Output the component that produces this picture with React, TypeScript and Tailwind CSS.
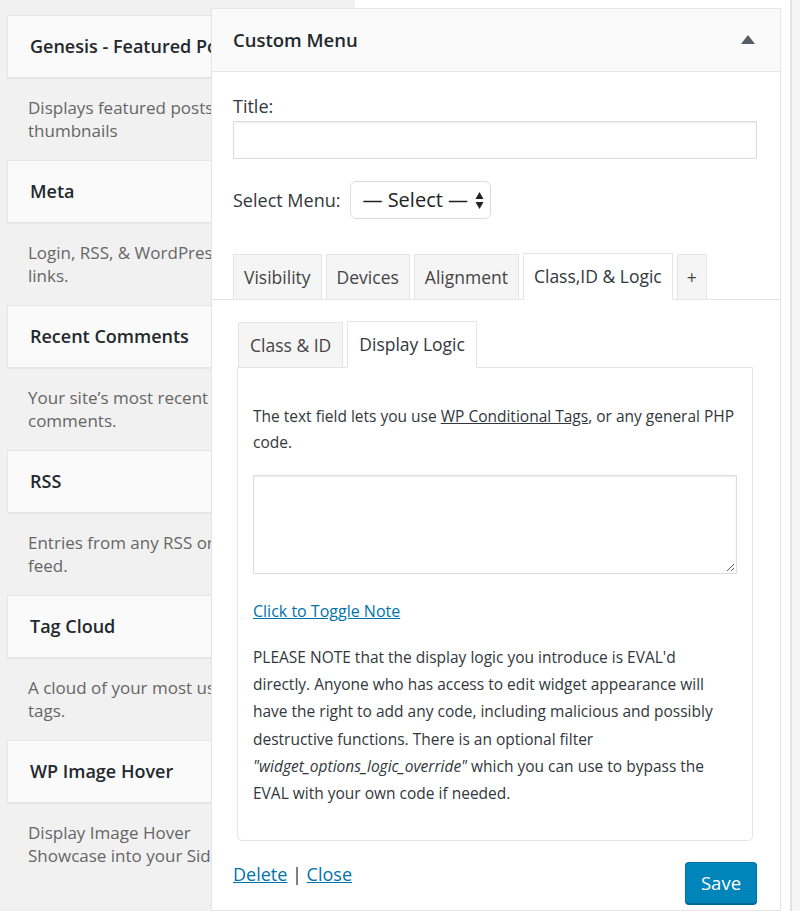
import React from "react";

const cards = [
  { title: "Genesis - Featured Posts", lines: ["Displays featured posts with", "thumbnails"] },
  { title: "Meta", lines: ["Login, RSS, & WordPress.org", "links."] },
  { title: "Recent Comments", lines: ["Your site\u2019s most recent", "comments."] },
  { title: "RSS", lines: ["Entries from any RSS or Atom", "feed."] },
  { title: "Tag Cloud", lines: ["A cloud of your most used", "tags."] },
  { title: "WP Image Hover", lines: ["Display Image Hover", "Showcase into your Sidebar"] },
];

export default function App() {
  return (
    <div
      className="relative flex w-[800px] h-[911px] overflow-hidden bg-[#f1f1f1] text-[#32373c]"
      style={{ fontFamily: '"Open Sans", "Noto Sans", sans-serif' }}
    >
      {/* left widget list */}
      <div className="w-[355px] shrink-0 pl-[7px] pt-[15px] flex flex-col">
        {cards.map((c) => (
          <div key={c.title} className="w-[340px] mb-[18px]">
            <div className="h-[63px] flex items-center px-[22px] bg-[#fafafa] border border-[#e5e5e5] shadow-[0_1px_1px_rgba(0,0,0,0.04)]">
              <span className="text-[18px] font-semibold text-[#23282d] whitespace-nowrap">{c.title}</span>
            </div>
            <div className="pt-[18px] pl-[21px] text-[17px] leading-[23px] text-[#666]">
              {c.lines.map((l) => (
                <div key={l} className="whitespace-nowrap">{l}</div>
              ))}
            </div>
          </div>
        ))}
      </div>

      {/* sidebar column */}
      <div className="w-[435px] shrink-0 bg-white h-full" />
      <div className="w-[10px] shrink-0 border-l-2 border-[#e2e2e2] bg-[#f5f5f5] h-full" />

      {/* open widget panel */}
      <div className="absolute left-[211px] top-[8px] w-[570px] bottom-0 bg-white border border-[#e5e5e5] shadow-[0_1px_1px_rgba(0,0,0,0.04)] flex flex-col">
        <div className="h-[63px] shrink-0 flex items-center justify-between pl-[21px] pr-[25px] bg-[#fafafa] border-b border-[#e5e5e5]">
          <span className="text-[18.5px] font-semibold text-[#23282d]">Custom Menu</span>
          <svg width="14" height="10" viewBox="0 0 14 10">
            <polygon points="7,0 14,9 0,9" fill="#555d66" />
          </svg>
        </div>

        <div className="flex flex-col px-[21px] pt-[23px]">
          <label className="text-[18px] leading-[22px] text-[#32373c]">Title:</label>
          <div className="mt-[4px] h-[38px] w-[524px] border border-[#ddd] shadow-[inset_0_1px_2px_rgba(0,0,0,0.07)] bg-white" />

          <div className="mt-[22px] flex items-center">
            <span className="text-[18px] text-[#32373c]">Select Menu:</span>
            <div className="ml-[10px] h-[38px] w-[141px] flex items-center justify-between pl-[11px] pr-[6px] border border-[#ddd] rounded-[6px] bg-white">
              <span className="text-[20px] text-[#222] whitespace-nowrap">— Select —</span>
              <svg width="9" height="19" viewBox="0 0 9 19">
                <polygon points="4.5,1 8.5,8 0.5,8" fill="#222" />
                <polygon points="0.5,11 8.5,11 4.5,18" fill="#222" />
              </svg>
            </div>
          </div>

          {/* main tabs */}
          <div className="mt-[34px] -mx-[22px] px-[22px] flex items-end gap-[4px] border-b border-[#e5e5e5]">
            {["Visibility", "Devices", "Alignment"].map((t) => (
              <div key={t} className="h-[46px] -mb-px flex items-center px-[10px] bg-[#f5f5f5] border border-[#e5e5e5] text-[17.5px] text-[#444]">
                {t}
              </div>
            ))}
            <div className="h-[47px] -mb-px flex items-center px-[10px] bg-white border border-[#e5e5e5] border-b-white text-[17.5px] text-[#32373c]">
              Class,ID &amp; Logic
            </div>
            <div className="h-[46px] -mb-px flex items-center px-[9px] bg-[#f5f5f5] border border-[#e5e5e5] text-[17.5px] text-[#444]">
              +
            </div>
          </div>

          {/* inner tabs */}
          <div className="mt-[21px] ml-[4px] w-[516px] flex flex-col">
            <div className="flex items-end gap-[4px] pl-px">
              <div className="h-[46px] -mb-px flex items-center px-[11px] bg-[#f5f5f5] border border-[#e5e5e5] text-[17.5px] text-[#444]">
                Class &amp; ID
              </div>
              <div className="h-[47px] -mb-px flex items-center px-[11px] bg-white border border-[#e5e5e5] border-b-white text-[17.5px] text-[#32373c] relative z-10">
                Display Logic
              </div>
            </div>
            <div className="border border-[#e5e5e5] rounded-b-[5px] px-[15px] pt-[35px] pb-[33px]">
              <p className="text-[15.5px] leading-[26px] text-[#32373c] whitespace-nowrap">
                The text field lets you use <span className="underline">WP Conditional Tags</span>, or any general PHP
                <br />
                code.
              </p>
              <div className="mt-[20px] h-[99px] w-[484px] border border-[#ddd] shadow-[inset_0_1px_2px_rgba(0,0,0,0.07)] relative">
                <svg className="absolute right-[1px] bottom-[1px]" width="10" height="10" viewBox="0 0 10 10">
                  <line x1="9" y1="2" x2="2" y2="9" stroke="#555" strokeWidth="1" />
                  <line x1="9" y1="6" x2="6" y2="9" stroke="#555" strokeWidth="1" />
                </svg>
              </div>
              <div className="mt-[24px] text-[16px] leading-[26px] text-[#0073aa] underline">Click to Toggle Note</div>
              <p className="mt-[20px] text-[15.5px] leading-[27.2px] text-[#32373c] whitespace-nowrap">
                PLEASE NOTE that the display logic you introduce is EVAL'd
                <br />
                directly. Anyone who has access to edit widget appearance will
                <br />
                have the right to add any code, including malicious and possibly
                <br />
                destructive functions. There is an optional filter
                <br />
                <em>"widget_options_logic_override"</em> which you can use to bypass the
                <br />
                EVAL with your own code if needed.
              </p>
            </div>
          </div>

          {/* footer */}
          <div className="mt-[21px] pr-[2px] flex items-start justify-between">
            <div className="text-[18px] leading-[24px] text-[#32373c]">
              <span className="text-[#0073aa] underline">Delete</span> | <span className="text-[#0073aa] underline">Close</span>
            </div>
            <div className="h-[42px] w-[72px] flex items-center justify-center rounded-[4px] bg-[#0085ba] border border-[#0073aa] border-b-[#006799] shadow-[0_1px_0_#006799] text-white text-[18.5px]">
              Save
            </div>
          </div>
        </div>
      </div>
    </div>
  );
}
